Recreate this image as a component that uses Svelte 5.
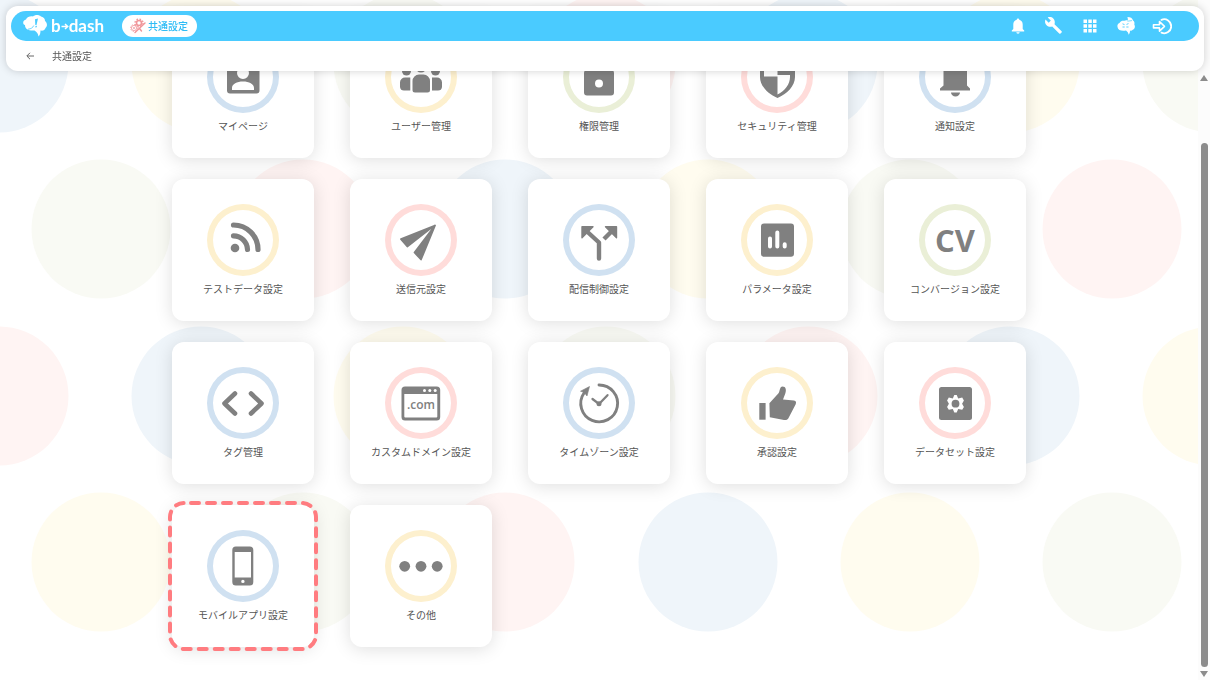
<script>
  const tiles = [
    { label: 'マイページ', icon: 'profile', ring: 'blue' },
    { label: 'ユーザー管理', icon: 'users', ring: 'yellow' },
    { label: '権限管理', icon: 'lock', ring: 'green' },
    { label: 'セキュリティ管理', icon: 'shield', ring: 'red' },
    { label: '通知設定', icon: 'bell', ring: 'blue' },
    { label: 'テストデータ設定', icon: 'feed', ring: 'yellow' },
    { label: '送信元設定', icon: 'send', ring: 'red' },
    { label: '配信制御設定', icon: 'split', ring: 'blue' },
    { label: 'パラメータ設定', icon: 'chart', ring: 'yellow' },
    { label: 'コンバージョン設定', icon: 'cv', ring: 'green' },
    { label: 'タグ管理', icon: 'code', ring: 'blue' },
    { label: 'カスタムドメイン設定', icon: 'domain', ring: 'red' },
    { label: 'タイムゾーン設定', icon: 'clock', ring: 'blue' },
    { label: '承認設定', icon: 'thumb', ring: 'yellow' },
    { label: 'データセット設定', icon: 'dataset', ring: 'red' },
    { label: 'モバイルアプリ設定', icon: 'phone', ring: 'blue', active: true },
    { label: 'その他', icon: 'more', ring: 'yellow' }
  ];

  // Polka dots: four tints repeat along each row, odd rows are shifted by half a step
  const tints = { b: '#eff5fa', y: '#fffcef', g: '#f9faf4', r: '#fff4f3' };
  const rows = ['bygr', 'grby', 'rbyg', 'ygrb'];
  const dots = rows.flatMap((row, j) =>
    Array.from({ length: 12 }, (_, i) => ({
      x: Math.round((j % 2 ? 101 : -1) + i * 202.2),
      y: 63 + Math.floor(j * 166.5),
      fill: tints[row[i % 4]]
    }))
  );
</script>

{#snippet glyph(name)}
  <svg viewBox="0 0 72 72" width="72" height="72" fill="#808080" aria-hidden="true">
    {#if name === 'profile'}
      <path fill-rule="evenodd" d="M23 20h26.500a3 3 0 0 1 3 3v26.500a3 3 0 0 1-3 3H23a3 3 0 0 1-3-3V23a3 3 0 0 1 3-3zM36 26a6 6 0 1 0 0 12a6 6 0 0 0 0-12zM25 49h22v-2c0-4-5-6.500-11-6.500S25 43 25 47z" />
    {:else if name === 'users'}
      <circle cx="36" cy="26" r="5.500" /><circle cx="21.500" cy="30" r="4.500" /><circle cx="50.500" cy="30" r="4.500" />
      <path d="M27.500 49V40a6.500 6.500 0 0 1 6.500-6.500h4.500a6.500 6.500 0 0 1 6.500 6.500v9a2.500 2.500 0 0 1-2.500 2.500H30a2.500 2.500 0 0 1-2.500-2.500z" />
      <path d="M25.300 36.500H20a5 5 0 0 0-5 5V46a4 4 0 0 0 4 3.500h6.300zM47 36.500h5a5 5 0 0 1 5 5V46a4 4 0 0 1-4 3.500h-6z" />
    {:else if name === 'lock'}
      <path d="M28 31v-5a8 8 0 0 1 16 0v5" fill="none" stroke="#808080" stroke-width="4" />
      <path fill-rule="evenodd" d="M24 29h24a3 3 0 0 1 3 3v19.500a3 3 0 0 1-3 3H24a3 3 0 0 1-3-3V32a3 3 0 0 1 3-3zM36 38.500a4 4 0 1 0 0 8a4 4 0 0 0 0-8z" />
    {:else if name === 'shield'}
      <path fill-rule="evenodd" d="M36.500 16L54 22v14c0 9-8 17-17.500 21C27 53 19 45 19 36V22zM36.500 20L23 25v10.500h13.500zM36.500 34v19.500C44 50 49 43 49 36v-2z" />
    {:else if name === 'bell'}
      <path d="M24.500 44.500V30a11.500 11.500 0 0 1 9-11v-1a2.800 2.800 0 0 1 5.500 0v1a11.500 11.500 0 0 1 9 11v14.500l3 3v2H21v-2zM32 51.500h9a4.500 4 0 0 1-9 0z" />
    {:else if name === 'feed'}
      <circle cx="28" cy="44" r="4.300" />
      <path d="M26.500 31.800A14 14 0 0 1 40.500 45.500M26.500 21A24.500 24.500 0 0 1 51 45.500" fill="none" stroke="#808080" stroke-width="5.200" stroke-linecap="round" />
    {:else if name === 'send'}
      <path d="M50 21.500L16 35.200L22.300 42.500L46 24zM50 21.500L29.500 48.500L36 55.500z" stroke="#808080" stroke-width="1.800" stroke-linejoin="round" />
    {:else if name === 'split'}
      <path d="M19 22.700h11l-11 11zM53.500 22.700h-11l11 11z" stroke="#808080" stroke-width="1.400" stroke-linejoin="round" />
      <path d="M24 27.500L36 38.500V54.500" fill="none" stroke="#808080" stroke-width="4.400" stroke-linecap="round" stroke-linejoin="round" />
      <path d="M41 35L49 27" stroke="#808080" stroke-width="4.400" />
    {:else if name === 'chart'}
      <rect x="20" y="19.500" width="33" height="33.200" rx="3" />
      <path d="M29 34.500v8M36.300 28.500v14M43.700 40.300v2.200" stroke="#fff" stroke-width="4" stroke-linecap="round" />
    {:else if name === 'cv'}
      <text x="36" y="48" text-anchor="middle" class="cv">CV</text>
    {:else if name === 'code'}
      <path d="M28 26.500L17.500 36.500L28 46.500M44 26.500L54.500 36.500L44 46.500" fill="none" stroke="#808080" stroke-width="4.600" stroke-linecap="round" stroke-linejoin="round" />
    {:else if name === 'domain'}
      <path fill-rule="evenodd" d="M20 19.500h31.700a3.500 3.500 0 0 1 3.500 3.500v27a3.500 3.500 0 0 1-3.500 3.500H20a3.500 3.500 0 0 1-3.500-3.500V23a3.500 3.500 0 0 1 3.500-3.500zM19.300 27v22.500a1 1 0 0 0 1 1h31a1 1 0 0 0 1-1V27z" />
      <g fill="#fff"><circle cx="39.500" cy="23.500" r="1.500" /><circle cx="44.800" cy="23.500" r="1.500" /><circle cx="50.200" cy="23.500" r="1.500" /></g>
      <text x="36" y="42" text-anchor="middle" class="com">.com</text>
    {:else if name === 'clock'}
      <path d="M36 18A18.400 18.400 0 1 1 21 26" fill="none" stroke="#808080" stroke-width="2.900" stroke-linecap="round" />
      <path d="M26.500 19.500L17.500 24.200L21 25.300L24 29z" stroke="#808080" stroke-width=".6" stroke-linejoin="round" />
      <path d="M29.500 32L36 37L44.500 28.200" fill="none" stroke="#808080" stroke-width="2.300" stroke-linecap="round" />
      <circle cx="36" cy="36.800" r="2.500" />
    {:else if name === 'thumb'}
      <rect x="18.300" y="36" width="6.300" height="16.700" />
      <path d="M28.400 36.300L37.500 26.300C39 24.500 38.500 19.500 41.500 19.500C45 19.500 45.500 23 44.300 26.500L42 32.500L53 33.500C55 33.800 55.500 35.300 54.700 37.200L47.800 50.500C46.800 52.700 45.500 53.200 43 53L28.800 50.300z" />
    {:else if name === 'dataset'}
      <rect x="20" y="20" width="33" height="33" rx="2.500" />
      <path fill="#fff" d="M35.300 28h2.400l1.500 3.400l4-.8l1.700 2.800l-1.800 3.300l1.800 3.300l-1.700 2.800l-4-.8l-1.500 3.400h-2.400l-1.500-3.400l-4 .8l-1.700-2.800l1.800-3.300l-1.800-3.300l1.700-2.800l4 .8z" />
      <circle cx="36.500" cy="36.700" r="3.900" />
    {:else if name === 'phone'}
      <path fill-rule="evenodd" d="M28.800 16.500h14a3.500 3.500 0 0 1 3.500 3.500v32a3.500 3.500 0 0 1-3.500 3.500h-14a3.500 3.500 0 0 1-3.500-3.500V20a3.500 3.500 0 0 1 3.500-3.500zM27.700 22v25.500h16.300V22zM35.900 49.700a1.700 1.700 0 1 0 0 3.400a1.700 1.700 0 0 0 0-3.400z" />
    {:else}
      <circle cx="19.700" cy="36.300" r="5.400" /><circle cx="36" cy="36.300" r="5.400" /><circle cx="52.200" cy="36.300" r="5.400" />
    {/if}
  </svg>
{/snippet}

<div class="page">
  <header>
    <div class="bar">
      <a class="logo" href="#home" aria-label="b→dash">
        <svg viewBox="0 0 24 22" width="24" height="22" aria-hidden="true">
          <path fill="#fff" d="M2 10C-1 9 0 5 3 4.500C4 1.500 8 1 10 1.500C12 -.5 16 -.5 18 1.500C21 2 22 4 22 6C24.500 8 24.500 11 22.500 13C22 15 20 16 17.500 15.500C17.500 18 17 20 15.500 21.500C15 18.500 14 17 11.500 15.500C6 16 2 14.500 2 10z" />
          <path d="M5 14.200C8 14 10 12.500 10.800 10.500" fill="none" stroke="#4acbff" stroke-width=".8" />
          <path d="M12 4.300l3-.8l-1.500 6.400l-1.200.2zM12.500 11l1.400-.2l-.2 1.500l-1.300.1z" fill="#4acbff" />
        </svg>
        <span class="word">b<svg viewBox="0 0 8 8" width="8" height="8" aria-hidden="true"><path d="M.5 4.500h6M4 2l2.700 2.500L4 7" fill="none" stroke="#fff" stroke-width="1.500" /></svg>dash</span>
      </a>
      <button class="pill">
        <svg viewBox="0 0 16 16" width="16" height="16" aria-hidden="true" fill="none" stroke="#f0969a">
          <circle cx="9" cy="5" r="2.500" stroke-width="1.600" />
          <circle cx="9" cy="5" r="4" stroke-width="1.300" stroke-dasharray="1.600 1.550" />
          <circle cx="4" cy="10" r="2.600" stroke-width=".8" />
          <circle cx="4" cy="10" r="3.500" stroke-width=".8" stroke-dasharray="1.300 1.400" />
          <circle cx="4" cy="10" r=".7" stroke-width=".8" />
          <path d="M5 14.500L15 5M9.500 10.500l2 2.500" stroke-width="1.400" stroke-linecap="round" />
        </svg>
        共通設定
      </button>
      <nav>
        <button aria-label="通知">
          <svg viewBox="0 0 20 20" width="20" height="20" fill="#fff"><path d="M8.700 3.800a1.300 1.300 0 0 1 2.600 0C13.500 4.400 14.700 6 14.700 8.500V13l1.500 1.600v.9H3.800v-.9L5.300 13V8.500c0-2.500 1.200-4.100 3.400-4.700zM8.300 16.200h3.400a1.700 1.500 0 0 1-3.400 0z" /></svg>
        </button>
        <button aria-label="ツール">
          <svg viewBox="0 0 20 20" width="20" height="20"><path fill="#fff" d="M17.600 15.200L10.500 8.200C11.200 6.200 10.800 4 9.300 2.400C7.800 .9 5.500 .6 3.700 1.400L6.800 4.500L4.700 6.700L1.500 3.500C.6 5.400 1 7.700 2.600 9.200C4.100 10.700 6.300 11.100 8.200 10.400L15.200 17.500C15.600 17.900 16.100 17.900 16.500 17.500L17.600 16.400C18 16 18 15.500 17.600 15.200z" /></svg>
        </button>
        <button aria-label="アプリ一覧">
          <svg viewBox="0 0 20 20" width="20" height="20" fill="#fff"><path d="M3.500 3.500h3.500v3.500h-3.500zM8.300 3.500h3.500v3.500H8.300zM13 3.500h3.500v3.500H13zM3.500 8.300h3.500v3.500h-3.500zM8.300 8.300h3.500v3.500H8.300zM13 8.300h3.500v3.500H13zM3.500 13h3.500v3.500h-3.500zM8.300 13h3.500v3.500H8.300zM13 13h3.500v3.500H13z" /></svg>
        </button>
        <button aria-label="サポート">
          <svg viewBox="0 0 20 20" width="20" height="20"><path fill="#fff" d="M1.500 11C1 9 2 7.500 3.500 7C4.500 5 6.500 4.500 8.500 4.800C9.500 4 11 4 12 4.600C11.600 3 12 1.800 11.300 1C14.500 1 16.500 2 17 4.500C18.500 5.500 18.700 7 18.300 8.500C19.600 10.500 18.800 13 16.800 13.800C16 14.800 14.600 14.800 14 14.500C14 16.500 13.600 17.500 12.700 18.700C12.300 16.800 11.600 15.700 10 14.500C6 15.300 2 14.500 1.500 11z" /><path d="M6.500 7.800l2 .8M12.500 7.600l-2 .8M6.500 11h2.200M10.300 11h2.200" stroke="#4acbff" stroke-width=".9" fill="none" /><path d="M11.500 5.200l4.500-.6" stroke="#4acbff" stroke-width=".7" /></svg>
        </button>
        <button aria-label="ログアウト">
          <svg viewBox="0 0 20 20" width="20" height="20" fill="none" stroke="#fff"><path d="M9.500 3.800A7 7 0 1 1 9.500 16.700" stroke-width="1.800" stroke-linecap="round" /><path d="M1.500 8.700h6V5.500l5 4.800l-5 4.800v-3.200h-6z" stroke-width="1.600" stroke-linejoin="round" /></svg>
        </button>
      </nav>
    </div>
    <div class="crumb">
      <button aria-label="戻る">
        <svg viewBox="0 0 8 8" width="8" height="8"><path d="M8 4H1M4 .8L.8 4L4 7.200" fill="none" stroke="#666" /></svg>
      </button>
      <h1>共通設定</h1>
    </div>
  </header>

  <main>
    <svg class="dots" width="100%" height="100%" aria-hidden="true">
      {#each dots as dot}
        <circle cx={dot.x} cy={dot.y} r="69.500" fill={dot.fill} />
      {/each}
    </svg>
    <div class="tiles">
      {#each tiles as tile}
        <a class="tile" href="#{tile.icon}">
          <span class="ring {tile.ring}">{@render glyph(tile.icon)}</span>
          <span class="label">{tile.label}</span>
          {#if tile.active}
            <svg class="marker" viewBox="0 0 150 150" aria-hidden="true">
              <rect x="2" y="2" width="146" height="146" rx="14" fill="none" stroke="#ff7c80" stroke-width="4" stroke-linecap="round" stroke-dasharray="8 8" stroke-dashoffset="-7" />
            </svg>
          {/if}
        </a>
      {/each}
    </div>
  </main>

  <div class="scroll" aria-hidden="true">
    <svg viewBox="0 0 8 6" width="8" height="6"><path d="M4 0L8 6H0z" /></svg>
    <div class="track"><div class="thumb"></div></div>
    <svg viewBox="0 0 8 6" width="8" height="6"><path d="M0 0h8L4 6z" /></svg>
  </div>
</div>

<style>
  :global(body) {
    margin: 0;
    background: #fff;
  }
  .page {
    display: flex;
    height: 100vh;
    overflow: hidden;
    font-family: 'Noto Sans CJK JP', sans-serif;
    font-size: 10px;
    line-height: 16px;
    color: #555;
  }
  button {
    display: flex;
    align-items: center;
    justify-content: center;
    border: 0;
    padding: 0;
    background: none;
    font: inherit;
    color: inherit;
    cursor: pointer;
  }
  a {
    color: inherit;
    text-decoration: none;
  }
  svg {
    display: block;
    flex: none;
  }
  header {
    position: fixed;
    z-index: 2;
    top: 6px;
    left: 6px;
    right: 6px;
    padding: 5px 5px 0;
    border-radius: 12px;
    background: #fff;
    box-shadow: 0 0 8px rgba(0, 0, 0, 0.18);
  }
  .bar {
    display: flex;
    align-items: center;
    height: 30px;
    padding: 0 19px 0 12px;
    border-radius: 15px;
    background: #4acbff;
  }
  .logo {
    display: flex;
    align-items: center;
    gap: 4px;
    color: #fff;
  }
  .word {
    display: flex;
    align-items: center;
    font: 700 17px/24px Lato, sans-serif;
  }
  .pill {
    gap: 2px;
    height: 22px;
    margin-left: 18px;
    padding: 0 9px 0 8px;
    border-radius: 11px;
    background: #fff;
    color: #2fbcf5;
    font-weight: 500;
  }
  nav {
    display: flex;
    margin-left: auto;
  }
  nav button {
    width: 36px;
    height: 30px;
  }
  .crumb {
    display: flex;
    align-items: center;
    gap: 14px;
    height: 30px;
    padding-left: 11px;
  }
  .crumb button {
    width: 16px;
    height: 16px;
  }
  h1 {
    margin: 0;
    font-size: 10px;
    font-weight: 400;
  }
  main {
    position: relative;
    flex: 1;
    overflow: hidden;
  }
  .dots {
    position: absolute;
    inset: 0;
  }
  .tiles {
    position: relative;
    display: grid;
    grid-template-columns: repeat(5, 142px);
    justify-content: center;
    gap: 21px 36px;
    padding-top: 16px;
  }
  .tile {
    position: relative;
    display: flex;
    flex-direction: column;
    align-items: center;
    gap: 5px;
    height: 142px;
    padding-top: 25px;
    box-sizing: border-box;
    border-radius: 12px;
    background: #fff;
    box-shadow: 0 2px 18px rgba(0, 0, 0, 0.13);
  }
  .ring {
    width: 72px;
    height: 72px;
    border-radius: 50%;
  }
  .blue {
    box-shadow: inset 0 0 0 6px #d0e1f1;
  }
  .yellow {
    box-shadow: inset 0 0 0 6px #fdf0ce;
  }
  .green {
    box-shadow: inset 0 0 0 6px #eaefd7;
  }
  .red {
    box-shadow: inset 0 0 0 6px #ffdcda;
  }
  .label {
    white-space: nowrap;
  }
  .cv {
    font: 700 31px 'Open Sans', sans-serif;
  }
  .com {
    font: 600 12px 'Open Sans', sans-serif;
  }
  .marker {
    position: absolute;
    top: -4px;
    left: -4px;
    width: 150px;
    height: 150px;
  }
  .scroll {
    display: flex;
    flex-direction: column;
    align-items: center;
    gap: 4px;
    width: 12px;
    padding: 75px 0 3px;
    box-sizing: border-box;
    background: #fcfcfc;
    fill: #8c8c8c;
  }
  .track {
    display: flex;
    flex: 1;
    align-items: flex-end;
  }
  .thumb {
    width: 7px;
    height: 90%;
    border-radius: 4px;
    background: #8c8c8c;
  }
</style>
